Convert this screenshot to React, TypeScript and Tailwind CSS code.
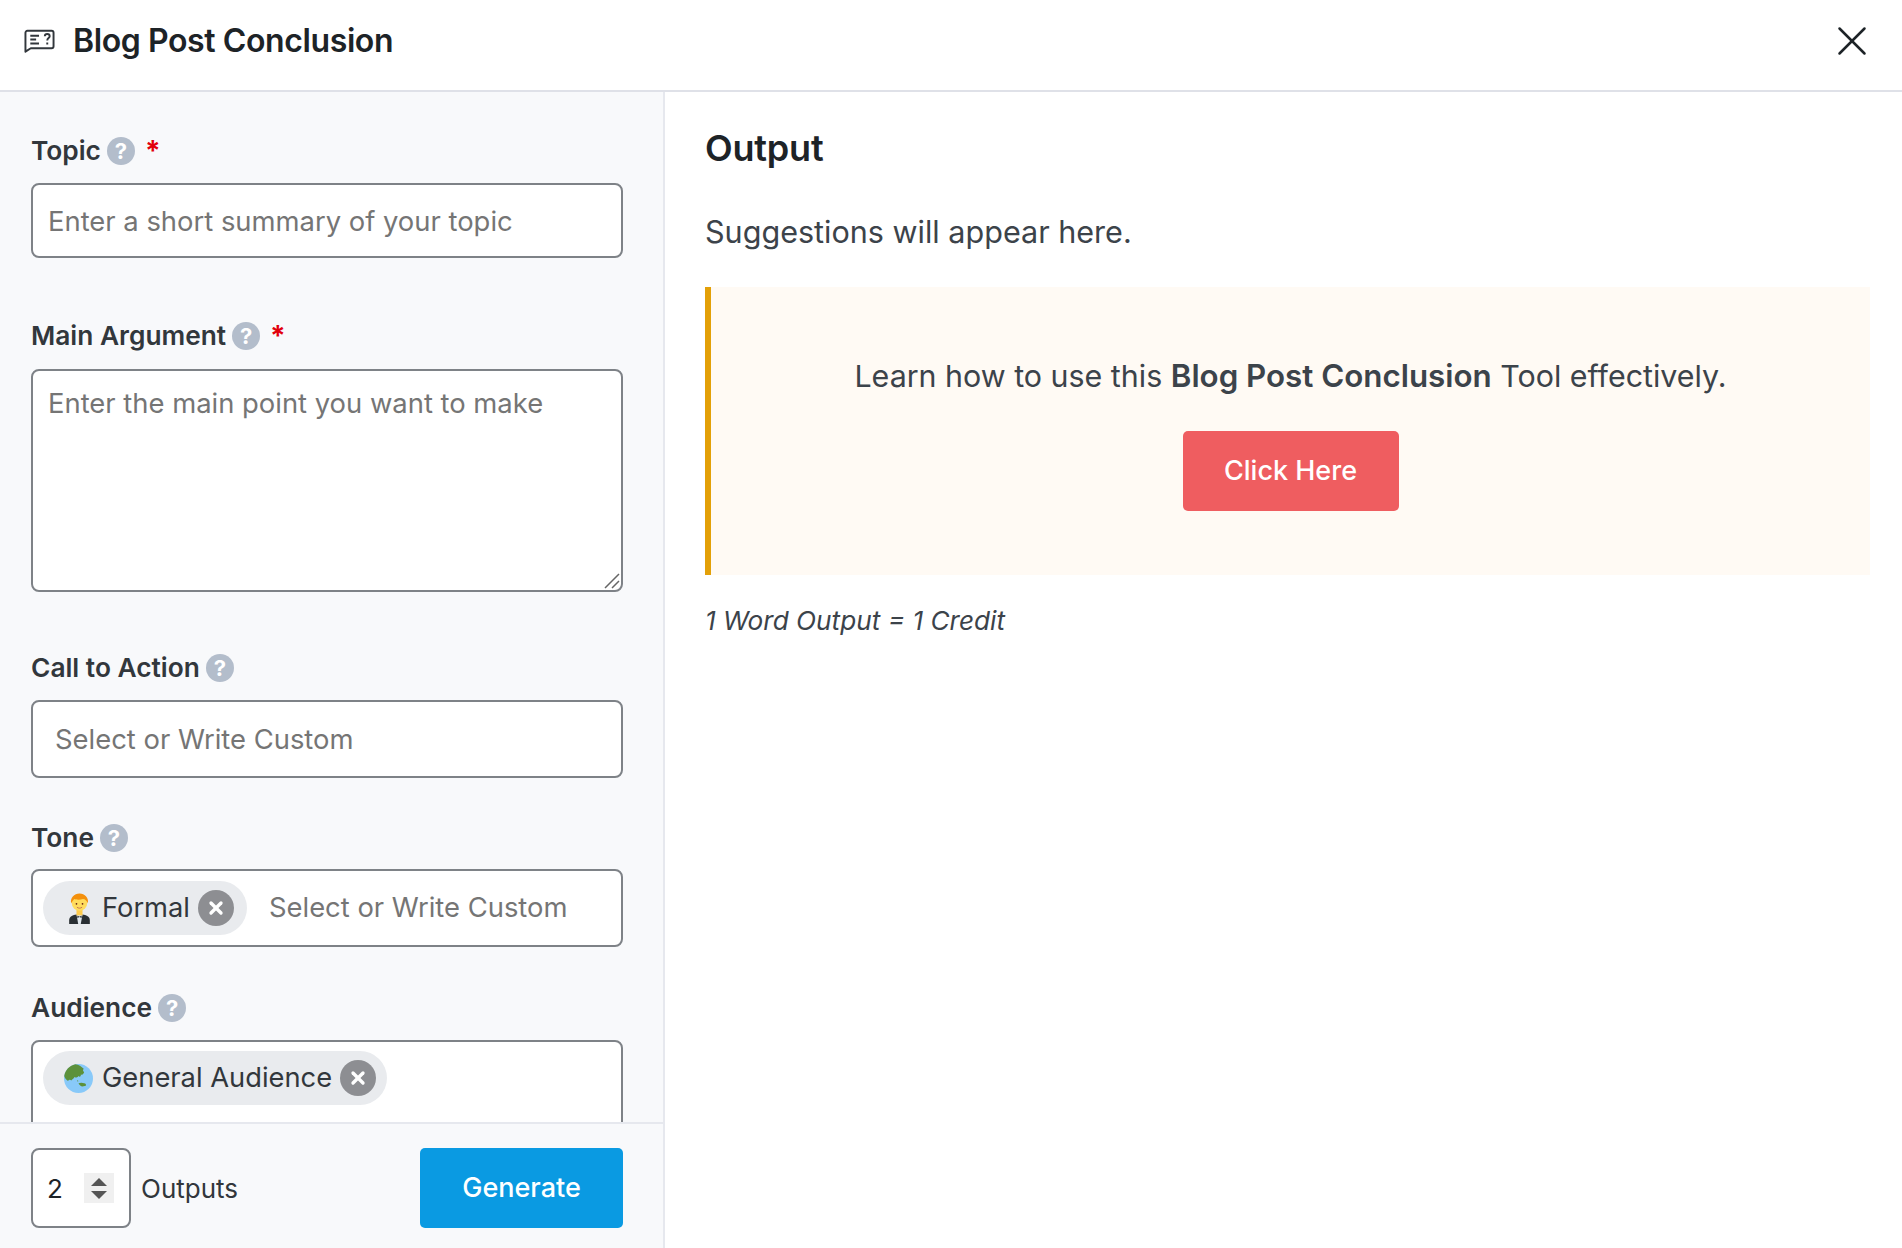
import React from 'react';
import { X } from 'lucide-react';

const HelpIcon = () => (
  <span className="flex h-[28px] w-[28px] items-center justify-center rounded-full bg-[#b3bdcb] text-[22px] font-bold leading-none text-white">
    ?
  </span>
);

const Label: React.FC<{ text: string; required?: boolean; className?: string }> = ({ text, required, className }) => (
  <div className={`flex h-[32px] items-center gap-[6px] text-[26.300px] font-semibold text-[#32373c] ${className}`}>
    <span>{text}</span>
    <HelpIcon />
    {required && <span className="ml-[4px] text-[28px] font-bold text-[#e2000b]">*</span>}
  </div>
);

const TuxedoEmoji = () => (
  <svg viewBox="0 0 36 36" className="h-[31px] w-[31px] shrink-0">
    <path d="M6 36v-4c0-5 4-7 12-7s12 2 12 7v4z" fill="#292f33" />
    <path d="M14.500 25h7l-2 11h-3z" fill="#e1e8ed" />
    <path d="M15.500 26l2.500 1.500 2.500-1.500v3l-2.500-1-2.500 1z" fill="#292f33" />
    <rect x="14.500" y="18" width="7" height="8" fill="#ffcc4d" />
    <circle cx="18" cy="11.500" r="9" fill="#ffdc5d" />
    <path d="M8.500 12C6.500 6 12 0.500 18 0.500S29.500 6 27.500 12c-1-3-3-5-5.500-5-3 1-8 1-10 0-1 1-2.500 3-3.500 5z" fill="#f4900c" />
    <circle cx="14.500" cy="12.500" r="1" fill="#662113" />
    <circle cx="21.500" cy="12.500" r="1" fill="#662113" />
    <path d="M15 16.500c2 1.500 4 1.500 6 0" stroke="#c1694f" strokeWidth="1" fill="none" />
  </svg>
);

const GlobeEmoji = () => (
  <svg viewBox="0 0 36 36" className="mr-[2px] h-[29px] w-[29px] shrink-0">
    <circle cx="18" cy="18" r="18" fill="#88c9f9" />
    <path d="M14 0.300C7 2 1.500 7 0.300 15c1 3 2.500 5 4.700 6 1-2 3-2 4-0.500 1-2 3-2 4-4.500 2 1 4 1 5-1 2 2 3 0 3-2 2 1 3.500-1 4-3-2-1-1.500-3-0.500-4-3-3-6-5-10.500-5.700z" fill="#5c913b" />
    <path d="M18 24c2-1 5-1 7 0 2 0 3 2 2 3-2 1-3 0-4 1-2 0-4-2-5-4zM16 20l2 1-1 1z" fill="#5c913b" />
  </svg>
);

const Chip: React.FC<{ emoji: React.ReactNode; text: string; className: string }> = ({ emoji, text, className }) => (
  <div className={`flex h-[54px] shrink-0 items-center rounded-full bg-[#e9ebee] pl-[21px] ${className}`}>
    {emoji}
    <span className="ml-[7px] text-[27.300px] text-[#32373c]">{text}</span>
    <span className="ml-[8px] flex h-[36px] w-[36px] items-center justify-center rounded-full bg-[#8d8e92]">
      <X size={20} strokeWidth={4} className="text-white" />
    </span>
  </div>
);

const inputClass =
  'block w-full rounded-[8px] border-2 border-[#7e8287] bg-white text-[27.400px] text-[#32373c] outline-none placeholder:text-[#757575]';

const App: React.FC = (): React.ReactElement => {
  return (
    <div className="flex h-screen flex-col overflow-hidden bg-white font-['Inter',sans-serif] text-[#32373c]">
      <header className="flex h-[92px] shrink-0 items-center border-b-2 border-[#dfe1e8] pb-[8px] pl-[24px] pr-[25px]">
        <svg viewBox="0 0 32 24" className="h-[24px] w-[31px] text-[#32373c]" fill="none" stroke="currentColor" strokeWidth="2">
          <path d="M1.500 23V3.500a2 2 0 0 1 2-2h25a2 2 0 0 1 2 2v14a2 2 0 0 1-2 2H7z" strokeLinejoin="round" />
          <path d="M6.500 6.500h9M6.500 10.500h6M6.500 14.500h9" />
          <path d="M21.500 7c0-3 5-3 5 0 0 2-2.500 2-2.500 4.500M24 13.500v2" />
        </svg>
        <h1 className="ml-[18px] text-[32px] font-semibold tracking-[-0.400px] text-[#1d2327]">Blog Post Conclusion</h1>
        <X size={50} strokeWidth={1.200} className="ml-auto text-[#1d2327]" />
      </header>

      <div className="flex min-h-0 flex-1">
        <aside className="flex w-[665px] shrink-0 flex-col border-r-2 border-[#e6e8ee] bg-[#f8f9fb]">
          <div className="min-h-0 flex-1 overflow-hidden pl-[31px] pr-[40px] pt-[43px]">
            <Label text="Topic" required className="mb-[16px]" />
            <input className={`${inputClass} h-[75px] px-[15px]`} placeholder="Enter a short summary of your topic" />

            <Label text="Main Argument" required className="mb-[17px] mt-[62px]" />
            <div className="relative">
              <textarea className={`${inputClass} h-[223px] resize-none px-[15px] py-[12px]`} placeholder="Enter the main point you want to make" />
              <svg viewBox="0 0 16 16" className="absolute bottom-[3px] right-[3px] h-[16px] w-[16px]" stroke="#666" strokeWidth="1.500">
                <path d="M1 15L15 1M8 15l7-7" />
              </svg>
            </div>

            <Label text="Call to Action" className="mb-[16px] mt-[60px]" />
            <input className={`${inputClass} h-[78px] px-[22px]`} placeholder="Select or Write Custom" />

            <Label text="Tone" className="mb-[15px] mt-[44px]" />
            <div className={`${inputClass} flex h-[78px] items-center pl-[10px]`}>
              <Chip emoji={<TuxedoEmoji />} text="Formal" className="pr-[13px]" />
              <span className="ml-[22px] text-[#757575]">Select or Write Custom</span>
            </div>

            <Label text="Audience" className="mb-[16px] mt-[45px]" />
            <div className={`${inputClass} flex h-[110px] items-start pl-[10px] pt-[9px]`}>
              <Chip emoji={<GlobeEmoji />} text="General Audience" className="pr-[11px]" />
            </div>
          </div>

          <footer className="flex h-[126px] shrink-0 items-start border-t-2 border-[#e6e8ee] pl-[31px] pr-[40px] pt-[24px]">
            <div className="flex h-[80px] w-[100px] items-center rounded-[8px] border-2 border-[#7e8287] bg-white pl-[14px]">
              <span className="text-[26px] text-[#1d2327]">2</span>
              <span className="ml-[21px] flex h-[30px] w-[30px] flex-col items-center justify-center gap-[5px] bg-[#f0f0f0]">
                <span className="h-0 w-0 border-x-[8px] border-b-[8px] border-x-transparent border-b-[#555]" />
                <span className="h-0 w-0 border-x-[8px] border-t-[8px] border-x-transparent border-t-[#555]" />
              </span>
            </div>
            <span className="ml-[10px] mt-[21px] text-[26px] text-[#32373c]">Outputs</span>
            <button className="ml-auto h-[80px] w-[203px] rounded-[5px] bg-[#0a9ae2] text-[27px] font-medium text-white">
              Generate
            </button>
          </footer>
        </aside>

        <main className="min-w-0 flex-1 pl-[40px] pr-[32px] pt-[29px]">
          <h2 className="text-[36px] font-semibold tracking-[-0.200px] text-[#1d2327]">Output</h2>
          <p className="mt-[34px] text-[30.550px] text-[#3c434a]">Suggestions will appear here.</p>
          <div className="mt-[32px] flex h-[288px] flex-col items-center border-l-[6px] border-[#e3a008] bg-[#fffaf4] pt-[66px]">
            <p className="h-[46px] text-[30.400px] text-[#3c434a]">
              Learn how to use this <strong className="text-[31.300px] font-semibold">Blog Post Conclusion</strong> Tool effectively.
            </p>
            <button className="mt-[32px] h-[80px] w-[216px] rounded-[5px] bg-[#ef5d60] text-[27px] font-medium text-white">
              Click Here
            </button>
          </div>
          <p className="mt-[26px] text-[26.200px] italic text-[#3c434a]">1 Word Output = 1 Credit</p>
        </main>
      </div>
    </div>
  );
};

export default App;
